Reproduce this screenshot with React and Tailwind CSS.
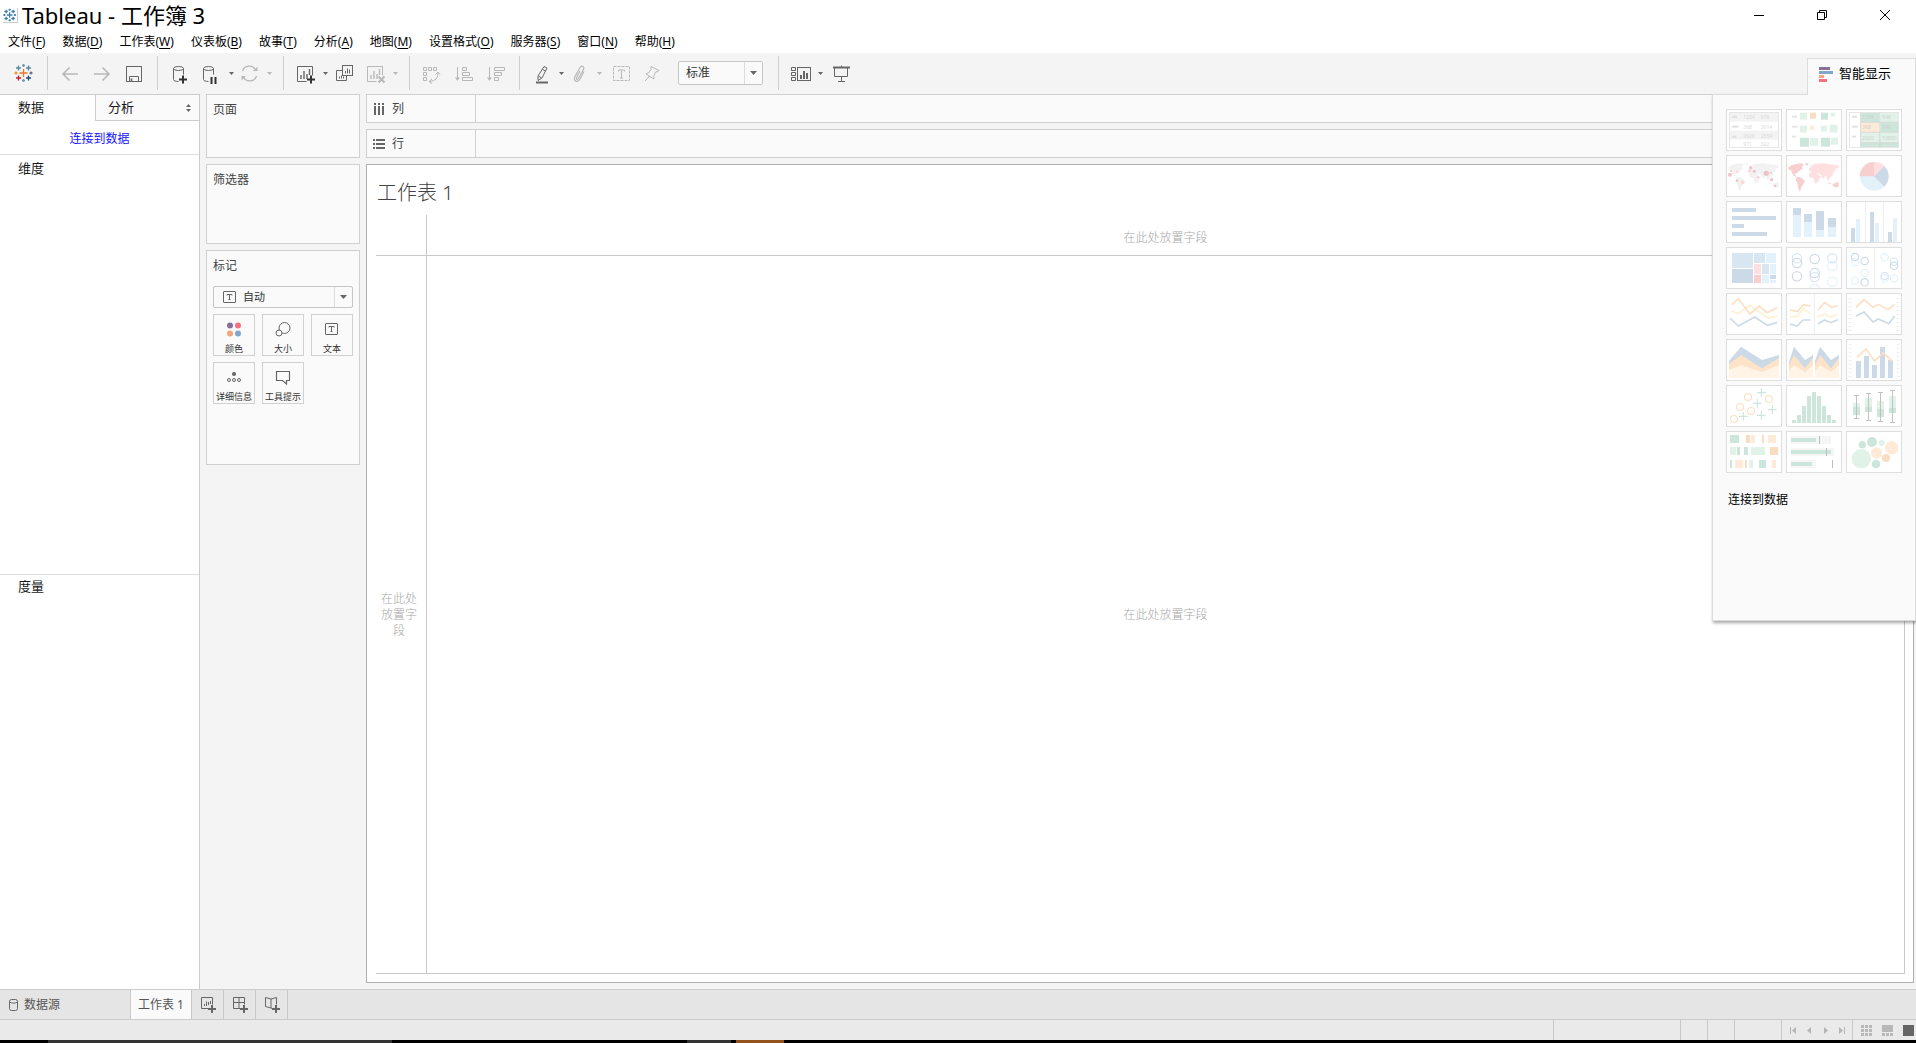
import React from 'react';

const MENUS = [
  ['文件', 'F'],
  ['数据', 'D'],
  ['工作表', 'W'],
  ['仪表板', 'B'],
  ['故事', 'T'],
  ['分析', 'A'],
  ['地图', 'M'],
  ['设置格式', 'O'],
  ['服务器', 'S'],
  ['窗口', 'N'],
  ['帮助', 'H'],
];

const LOGO_MARKS = [
  [11.5, 12, 4, '#e8762c'],
  [6.5, 7, 2.5, '#59879b'],
  [16.5, 7, 2.5, '#59879b'],
  [6.5, 17, 2.5, '#c72035'],
  [16.5, 17, 2.5, '#1f447e'],
  [11.5, 4.5, 1.5, '#7199a6'],
  [11.5, 19.5, 1.5, '#7199a6'],
  [4, 12, 1.5, '#eb912c'],
  [19, 12, 1.5, '#5b6591'],
];

const Logo = ({ mono }) => (
  <svg
    viewBox={mono ? '2 2 20 20' : '0 0 24 24'}
    className={mono ? 'size-3.5' : 'size-6'}
    fill="none"
    strokeWidth={mono ? 1.8 : 1.3}
  >
    {LOGO_MARKS.map(([x, y, r, color]) => (
      <path key={`${x}-${y}`} d={`M${x - r} ${y}h${r * 2}M${x} ${y - r}v${r * 2}`} stroke={mono || color} />
    ))}
  </svg>
);

// Botão da barra de ferramentas, ícone desenhado numa grade 24x24
const Tool = ({ label, disabled, children }) => (
  <button
    type="button"
    aria-label={label}
    disabled={disabled}
    className={`mx-1 size-6 shrink-0 ${disabled ? 'text-[#b8b8b8]' : 'text-[#666666]'}`}
  >
    <svg viewBox="0 0 24 24" className="size-6" fill="none" stroke="currentColor" strokeWidth="1">
      {children}
    </svg>
  </button>
);

const Caret = ({ label, tight, disabled }) => (
  <button
    type="button"
    aria-label={label}
    className={`-ml-1 flex h-6 w-3.5 shrink-0 items-center justify-center ${tight ? '-mr-1' : ''} ${disabled ? 'text-[#b8b8b8]' : 'text-[#666666]'}`}
  >
    <svg viewBox="0 0 5 3" className="h-[3px] w-[5px]" fill="currentColor"><path d="M0 0h5L2.5 3z" /></svg>
  </button>
);

const Separator = () => <div className="ml-[7px] mr-1.5 h-[34px] w-px shrink-0 bg-[#cfcfcf]" />;

const SheetGlyph = () => (
  <>
    <path d="M12.5 20.5H3.5V5.5h15v9" />
    <path d="M7 18v-4M10 18v-8M13 18v-5M15.5 14v-6" strokeWidth="1.4" />
  </>
);

const SelectArrow = () => (
  <span className="pointer-events-none absolute inset-y-px right-px flex w-[18px] items-center justify-center border-l border-[#dcdcdc] text-[#666666]">
    <svg viewBox="0 0 7 4" className="h-1 w-[7px]" fill="currentColor"><path d="M0 0h7L3.5 4z" /></svg>
  </span>
);

const Toolbar = () => (
  <div className="flex h-[41px] items-center bg-[#f4f4f4] pb-px pl-2">
    <button type="button" aria-label="开始页" className="mx-1 size-6 shrink-0"><Logo /></button>
    <Separator />
    <Tool label="撤消" disabled><path d="M20 13H5M11.5 6.5L5 13l6.5 6.5" strokeWidth="1.6" /></Tool>
    <Tool label="重做" disabled><path d="M4 13h15M12.5 6.5L19 13l-6.5 6.5" strokeWidth="1.6" /></Tool>
    <Tool label="保存">
      <rect x="4.5" y="5.5" width="15" height="15" />
      <path d="M7.5 20.5v-5h9v5" />
      <path d="M9.5 17.5V20" strokeWidth="1.6" />
    </Tool>
    <Separator />
    <Tool label="新建数据源">
      <ellipse cx="10.5" cy="7.5" rx="5" ry="2" />
      <path d="M5.5 7.5v11c0 1.2 2 1.9 5 2M15.5 7.5v6" />
      <path d="M11 18.5h8M15 14.5v8" stroke="#333333" strokeWidth="2" />
    </Tool>
    <Tool label="暂停自动更新">
      <ellipse cx="8.5" cy="7.5" rx="5" ry="2" />
      <path d="M3.5 7.5v11c0 1.2 2 1.9 5 2M13.5 7.5v6" />
      <path d="M11.5 16v7M15.5 16v7" stroke="#333333" strokeWidth="2" />
    </Tool>
    <Caret label="暂停选项" tight />
    <Tool label="运行更新" disabled>
      <path d="M4.5 10a7 7 0 0 1 13-1M18.5 15a7 7 0 0 1-13 1" strokeWidth="1.3" />
      <path d="M19.5 5.5V10H15zM3.5 19.5V15H8z" fill="currentColor" stroke="none" />
    </Tool>
    <Caret label="更新选项" disabled />
    <Separator />
    <Tool label="新建工作表">
      <SheetGlyph />
      <path d="M13 18.5h8M17 14.5v8" stroke="#333333" strokeWidth="2" />
    </Tool>
    <Caret label="新建选项" tight />
    <Tool label="复制工作表">
      <rect x="10.5" y="4.5" width="10" height="10" />
      <path d="M10.5 9.5h-6v10h10v-5" />
      <path d="M13.5 12.5V10M15.5 12.5v-5M17.5 12.5v-4M7.5 17.5v-2M9.5 17.5v-3M11.5 17.5v-2" />
    </Tool>
    <Tool label="清除工作表" disabled>
      <SheetGlyph />
      <path d="M14.5 15.5l6 6M20.5 15.5l-6 6" strokeWidth="2" />
    </Tool>
    <Caret label="清除选项" disabled />
    <Separator />
    <Tool label="交换行和列" disabled>
      <path d="M3.5 6.5h3v3h-3zM8.5 6.5h3v3h-3zM13.5 6.5h3v3h-3zM3.5 11.5h3v3h-3zM3.5 16.5h3v3h-3z" />
      <path d="M18 12c0 5-2.5 7.5-8 8.5M15.5 13.5L18 11l2 2.5M12 18l-3 2.5 3 2" />
    </Tool>
    <Tool label="升序排序" disabled>
      <path d="M5.5 6v12M10.5 6.5h4v3h-4zM10.5 11.5h7v3h-7zM10.5 16.5h10v3h-10z" />
      <path d="M3 16.5h5L5.5 20z" fill="currentColor" stroke="none" />
    </Tool>
    <Tool label="降序排序" disabled>
      <path d="M5.5 6v12M10.5 6.5h10v3h-10zM10.5 11.5h7v3h-7zM10.5 16.5h4v3h-4z" />
      <path d="M3 16.5h5L5.5 20z" fill="currentColor" stroke="none" />
    </Tool>
    <Separator />
    <Tool label="突出显示">
      <path d="M14 5.5l3 1.5-5 10-4 2.5V15zM8.5 15l3 2M12.5 8.5l3 1.5" />
      <path d="M6 21.5h12" strokeWidth="2" />
    </Tool>
    <Caret label="突出显示选项" tight />
    <Tool label="组成员" disabled>
      <path d="M12 10l-3.500 6.500c-.8 1.500 1 2.500 1.900 1l5-9c1.600-3-1.900-4.400-3.400-2l-5 9c-2.500 4.500 2.500 7 5 2.500l4-7.500" strokeWidth="1.2" />
    </Tool>
    <Caret label="组选项" disabled />
    <Tool label="显示标记标签" disabled>
      <rect x="3.5" y="5.5" width="16" height="14" strokeDasharray="3 1" />
      <path d="M8.5 10.5V9h6v1.5M11.5 9v8M10 17h3" />
    </Tool>
    <Tool label="固定轴" disabled>
      <path d="M9 5.5l8 4-1 1-2.500.5-1.500 3.500v3.500l-8-5 3-1.500 2-3zM7.500 15L3 20" />
    </Tool>
    <div className="relative mx-2 shrink-0">
      <select
        aria-label="适合"
        className="block h-6 w-[85px] appearance-none rounded-xs border border-[#c6c6c6] bg-[#fafafa] pl-[7px] text-xs leading-5 text-[#333333]"
      >
        <option>标准</option>
        <option>适合宽度</option>
        <option>整个视图</option>
      </select>
      <SelectArrow />
    </div>
    <Separator />
    <Tool label="显示/隐藏卡">
      <path d="M2.5 6.5h4v3h-4zM2.5 11.5h4v3h-4zM2.5 16.5h4v3h-4z" />
      <rect x="8.5" y="6.5" width="13" height="13" />
      <path d="M12 18v-4M15 18v-8M18 18v-6" strokeWidth="2" />
    </Tool>
    <Caret label="卡选项" />
    <Tool label="演示模式">
      <path d="M2 6.5h17" strokeWidth="2" />
      <path d="M3.500 7v8.500h13V7M10.5 4.5V6M10.5 15.5v5M7 20.5h7" />
    </Tool>
  </div>
);

const TitleBar = () => (
  <div className="flex h-[30px] items-center justify-between pl-[3px]">
    <div className="flex items-center gap-1">
      <span className="border-b border-r border-[#cccccc]"><Logo mono="#3f7fae" /></span>
      <h1 className="text-[22px] leading-[30px] text-black">Tableau - 工作簿 3</h1>
    </div>
    <div className="flex text-black">
      <button type="button" aria-label="最小化" className="flex h-7 w-[63px] items-center justify-center">
        <svg viewBox="0 0 10 10" className="size-2.5" stroke="currentColor"><path d="M0 5.5h10" /></svg>
      </button>
      <button type="button" aria-label="还原" className="flex h-7 w-[63px] items-center justify-center">
        <svg viewBox="0 0 10 10" className="size-2.5" fill="none" stroke="currentColor"><path d="M.5 2.5h7v7h-7zM2.5 2.5v-2h7v7h-2" /></svg>
      </button>
      <button type="button" aria-label="关闭" className="flex h-7 w-[63px] items-center justify-center">
        <svg viewBox="0 0 10 10" className="size-2.5" stroke="currentColor"><path d="M0 0l10 10M10 0L0 10" /></svg>
      </button>
    </div>
  </div>
);

const MenuBar = () => (
  <nav className="flex h-[23px] items-start gap-[17px] pl-2 text-xs leading-6 text-black">
    {MENUS.map(([name, key]) => (
      <button key={key} type="button">
        {name}(<span className="underline underline-offset-2">{key}</span>)
      </button>
    ))}
  </nav>
);

const DataPane = () => (
  <aside className="flex w-[200px] shrink-0 flex-col border-r border-t border-[#cccccc] bg-white text-[13px] text-[#1a1a1a]">
    <div className="flex h-[26px]">
      <button type="button" className="w-[95px] pl-[18px] text-left">数据</button>
      <button type="button" className="flex flex-1 items-center justify-between border-b border-l border-[#cccccc] bg-[#fafafa] pl-3 pr-2">
        分析
        <svg viewBox="0 0 5 8" className="h-2 w-[5px]" fill="#666666"><path d="M0 3h5L2.5 0zM0 5h5L2.5 8z" /></svg>
      </button>
    </div>
    <div className="h-[34px] border-b border-[#dedede] pt-2 text-center text-xs leading-5">
      <a href="#connect" className="text-[#1414ff]">连接到数据</a>
    </div>
    <section className="h-[420px] border-b border-[#dedede] pl-[18px] pt-1 leading-5">
      <h2 className="-mt-px">维度</h2>
    </section>
    <section className="flex-1 pl-[18px] pt-px leading-5">
      <h2>度量</h2>
    </section>
  </aside>
);

const Card = ({ title, className, children }) => (
  <section className={`border border-[#d0d0d0] bg-[#fafafa] px-1.5 pt-[7px] text-xs text-[#444444] ${className}`}>
    <h2 className="leading-4">{title}</h2>
    {children}
  </section>
);

const MarkButton = ({ label, children }) => (
  <button type="button" className="flex h-[42px] flex-col items-center justify-between overflow-hidden border border-[#d0d0d0] bg-[#fafafa] pt-1 text-[9px] leading-[13px] text-[#333333]">
    <svg viewBox="0 0 22 22" className="size-[22px] shrink-0" fill="none" stroke="#666666">{children}</svg>
    <span className="whitespace-nowrap">{label}</span>
  </button>
);

const TextBoxGlyph = () => (
  <>
    <rect x="4.5" y="4.5" width="12" height="11" rx=".5" />
    <path d="M8 8.5v-1h5v1M10.5 7.5v5M9.5 12.5h2" />
  </>
);

const CardsColumn = () => (
  <div className="flex w-[154px] shrink-0 flex-col gap-1.5">
    <Card title="页面" className="h-16" />
    <Card title="筛选器" className="h-20" />
    <Card title="标记" className="h-[215px]">
      <div className="relative mb-1.5 mt-3">
        <select
          aria-label="标记类型"
          className="block h-[22px] w-full appearance-none rounded-xs border border-[#c6c6c6] bg-[#fafafa] pl-[29px] text-[11px] leading-5 text-[#333333]"
        >
          <option>自动</option>
          <option>条形图</option>
          <option>线</option>
        </select>
        <svg viewBox="0 0 22 22" className="pointer-events-none absolute left-1.5 top-px size-[22px]" fill="none" stroke="#666666">
          <TextBoxGlyph />
        </svg>
        <SelectArrow />
      </div>
      <div className="grid grid-cols-3 gap-x-[7px] gap-y-1.5">
        <MarkButton label="颜色">
          <g stroke="none">
            <circle cx="7" cy="6.5" r="3" fill="#86719a" />
            <circle cx="15" cy="6.5" r="3" fill="#fb6d81" />
            <circle cx="7" cy="14.5" r="3" fill="#f4a57b" />
            <circle cx="15" cy="14.5" r="3" fill="#82a5cc" />
          </g>
        </MarkButton>
        <MarkButton label="大小">
          <circle cx="12.5" cy="9" r="5.5" />
          <circle cx="7" cy="14" r="3" fill="#fafafa" />
        </MarkButton>
        <MarkButton label="文本"><TextBoxGlyph /></MarkButton>
        <MarkButton label="详细信息">
          <circle cx="11" cy="7" r="2" fill="#666666" stroke="none" />
          <circle cx="6" cy="13" r="1.5" />
          <circle cx="11" cy="13" r="1.5" />
          <circle cx="16" cy="13" r="1.5" />
        </MarkButton>
        <MarkButton label="工具提示">
          <path d="M4.5 4.5h13v9h-3V17l-4-3.5h-6z" strokeWidth="1.2" />
        </MarkButton>
      </div>
    </Card>
  </div>
);

const Shelf = ({ title, children }) => (
  <div className="flex h-[29px] border border-r-0 border-[#d0d0d0] bg-[#fafafa] text-xs text-[#444444]">
    <div className="flex w-[109px] items-center gap-[7px] border-r border-[#d0d0d0] pl-1.5">
      <svg viewBox="0 0 12 12" className="size-3" fill="none" stroke="#666666" strokeWidth="2">{children}</svg>
      {title}
    </div>
  </div>
);

const DROP_HINT = '在此处放置字段';

const Worksheet = () => (
  <main className="flex min-w-0 flex-1 flex-col gap-1.5">
    <Shelf title="列">
      <path d="M2 0v2M2 3v9M6 0v2M6 3v9M10 0v2M10 3v9" />
    </Shelf>
    <Shelf title="行">
      <path d="M0 2h2M3 2h9M0 6h2M3 6h9M0 10h2M3 10h9" />
    </Shelf>
    <div className="mb-1.5 mr-0.5 flex flex-1 flex-col border border-[#b0b0b0] bg-white pb-2 pl-[9px] pr-2 font-light">
      <h2 className="h-[50px] pl-px pt-3 text-xl leading-8 text-[#444444]">工作表 1</h2>
      <div className="grid flex-1 grid-cols-[51px_1fr] grid-rows-[41px_1fr] border-b border-r border-[#c8c8c8] text-xs leading-4 text-[#a8a8a8]">
        <div className="border-b border-r border-[#c8c8c8]" />
        <div className="flex items-center justify-center border-b border-[#c8c8c8] pt-1.5">{DROP_HINT}</div>
        <div className="flex items-center justify-center border-r border-[#c8c8c8] pr-1 text-center">
          <p className="w-9">{DROP_HINT}</p>
        </div>
        <div className="flex items-center justify-center">{DROP_HINT}</div>
      </div>
    </div>
  </main>
);

// Formas simplificadas dos continentes para as miniaturas de mapa
const WORLD = [
  'M3 35l11-8 25-5 12 1-7 9 4 5-11 8-8 7-7 2 8 9-11-4-8-18-5 2z',
  'M29 63l8 0 8 3 9 10-6 10-5 8-4 13-5-9-3-17-5-9z',
  'M54 22h12l-7 9z',
  'M66 52l8-3h16l4 9 8 3-8 15-5 6h-6l-3-15-12-3z',
  'M66 44l-1-6 11-10 6-5 28-1 18 3 26 3 2 7-11 3-2 9-5 2-1 11-7 3-5 10-4-1-5-14-6 10-4-2-4-9-8-5-8 2-10-4z',
  'M118 76l7 4 10 2-9 2z',
  'M136 85l8-4 10-3 2 12-7 5-11-4z',
];

const Circles = ({ items, r, color }) => (
  <g fill="none" stroke={color} strokeWidth="3.5">
    {items.map(([x, y]) => <circle key={`${x}-${y}`} cx={x} cy={y} r={r} />)}
  </g>
);

const Rects = ({ items, color }) => (
  <g fill={color}>
    {items.map(([x, y, w, h]) => <rect key={`${x}-${y}`} x={x} y={y} width={w} height={h} />)}
  </g>
);

const BLUE = '#ccdae8';
const SKY = '#e3f1fb';
const GREEN = '#cde6db';
const MINT = '#e1f3e8';
const ORANGE = '#fadcc0';
const PEACH = '#feead6';

const THUMBS = [
  ['文本表', (
    <>
      <rect x="7.5" y="7.5" width="147" height="105" fill="#fff" stroke="#e6e6e6" strokeWidth="3" />
      <Rects color="#f3f3f3" items={[[9, 9, 144, 26], [9, 62, 144, 27]]} />
      <Rects color="#e2e2e2" items={[[15, 17, 15, 7], [15, 47, 19, 6], [15, 77, 13, 7]]} />
      <g fill="#d8d8d8" fontSize="15">
        <text x="49" y="28">1234</text><text x="101" y="28">678</text>
        <text x="49" y="56">368</text><text x="101" y="56">3014</text>
        <text x="49" y="83">2620</text><text x="101" y="83">2559</text>
        <text x="49" y="107">971</text><text x="101" y="107">322</text>
      </g>
    </>
  )],
  ['热图', (
    <>
      <Rects color="#e6e6e6" items={[[15, 17, 15, 6], [15, 47, 18, 6], [15, 77, 12, 6]]} />
      <Rects color={MINT} items={[[39, 8, 21, 21], [132, 8, 12, 12], [39, 47, 21, 21], [102, 47, 18, 18], [128, 44, 24, 24], [69, 84, 24, 24], [132, 83, 21, 21]]} />
      <Rects color={GREEN} items={[[102, 8, 21, 21], [39, 83, 27, 27], [102, 83, 27, 27]]} />
      <Rects color={ORANGE} items={[[69, 8, 18, 18]]} />
      <Rects color={PEACH} items={[[69, 47, 12, 12]]} />
    </>
  )],
  ['突出显示表', (
    <>
      <rect x="7.5" y="7.5" width="147" height="105" fill="#fff" stroke="#e6e6e6" strokeWidth="3" />
      <Rects color="#e2e2e2" items={[[15, 17, 15, 6], [15, 47, 18, 6], [15, 77, 12, 6]]} />
      <Rects color={GREEN} items={[[42, 9, 55, 27], [100, 38, 54, 28], [42, 99, 112, 12]]} />
      <Rects color={MINT} items={[[100, 9, 54, 27], [42, 69, 112, 28]]} />
      <Rects color={PEACH} items={[[42, 39, 55, 27]]} />
      <path d="M42 37h112M42 67h112M42 98h112M98.5 8v104M41 8v104" stroke="#d0d0d0" strokeWidth="2.5" />
      <g fill="#cfcfcf" fontSize="15">
        <text x="46" y="28">1234</text><text x="106" y="28">546</text>
        <text x="46" y="58">368</text><text x="106" y="58">340</text>
        <text x="46" y="89">2620</text><text x="106" y="89">53890</text>
      </g>
    </>
  )],
  ['符号地图', (
    <>
      <g fill="#f2f2f2">{WORLD.map((d) => <path key={d} d={d} />)}</g>
      <g fill="#efc3cb">
        <circle cx="9" cy="56" r="6" /><circle cx="118" cy="52" r="8" /><circle cx="82" cy="46" r="5" />
        <circle cx="71" cy="35" r="5" /><circle cx="30" cy="74" r="4" /><circle cx="134" cy="71" r="5" />
        <circle cx="144" cy="90" r="4" /><circle cx="12" cy="45" r="3" /><circle cx="132" cy="50" r="3" /><circle cx="93" cy="64" r="3" />
      </g>
      <g fill="#fcd9d9"><circle cx="47" cy="79" r="6" /><circle cx="31" cy="47" r="4" /><circle cx="67" cy="45" r="5" /></g>
    </>
  )],
  ['地图', (
    <g>{WORLD.map((d, i) => <path key={d} d={d} fill={i === 3 || i === 4 ? '#ffdfdf' : '#f7cfcf'} />)}</g>
  )],
  ['饼图', (
    <>
      <circle cx="82" cy="61" r="43" fill={SKY} />
      <path d="M81 61V18a43 43 0 0 0-43 43z" fill="#f7cfcf" />
      <path d="M81 61V18a43 43 0 0 1 31 13z" fill="#ffdfdf" />
      <path d="M81 61l31-30a43 43 0 0 1 0 61z" fill={BLUE} />
    </>
  )],
  ['水平条', <Rects color={BLUE} items={[[15, 18, 72, 12], [15, 42, 132, 12], [15, 66, 36, 12], [15, 90, 105, 12]]} />],
  ['堆叠条', (
    <>
      <Rects color={BLUE} items={[[18, 18, 24, 21], [51, 36, 24, 24], [87, 27, 24, 57], [123, 48, 24, 27]]} />
      <Rects color={SKY} items={[[18, 39, 24, 66], [51, 60, 24, 45], [87, 84, 24, 21], [123, 75, 24, 30]]} />
    </>
  )],
  ['并排条', (
    <>
      <Rects color="#ededed" items={[[54, 0, 3, 120], [108, 0, 3, 120]]} />
      <Rects color={BLUE} items={[[12, 78, 12, 42], [69, 30, 12, 90], [123, 90, 12, 30]]} />
      <Rects color={SKY} items={[[27, 51, 12, 69], [84, 63, 12, 57], [138, 48, 12, 72]]} />
    </>
  )],
  ['树状图', (
    <>
      <Rects color="#d8e6f2" items={[[15, 15, 63, 45], [81, 15, 33, 30], [105, 48, 21, 30]]} />
      <Rects color={BLUE} items={[[15, 63, 63, 42], [129, 81, 18, 12]]} />
      <Rects color={SKY} items={[[117, 15, 30, 30], [129, 48, 18, 30], [105, 81, 21, 24], [129, 96, 18, 9]]} />
      <Rects color="#ffdfdf" items={[[81, 48, 21, 30]]} />
      <Rects color="#f7cfcf" items={[[81, 81, 21, 24]]} />
    </>
  )],
  ['圆视图', (
    <>
      <Circles r={14} color={SKY} items={[[136, 54], [136, 101], [84, 123]]} />
      <Circles r={14} color="#d8e6f2" items={[[30, 31], [136, 31], [83, 87]]} />
      <Circles r={14} color={BLUE} items={[[30, 45], [83, 33], [30, 85], [83, 75]]} />
    </>
  )],
  ['并排圆', (
    <>
      <Rects color="#ededed" items={[[81, 0, 3, 120]]} />
      <Circles r={11} color={SKY} items={[[24, 42], [24, 98], [53, 75], [113, 28], [113, 91], [141, 91]]} />
      <Circles r={11} color="#d8e6f2" items={[[141, 41], [113, 84]]} />
      <Circles r={11} color={BLUE} items={[[24, 27], [53, 39], [53, 103], [141, 53]]} />
    </>
  )],
  ['连续线', (
    <g fill="none" strokeWidth="5">
      <path d="M12 50l22 9 34-25 55 38 28-6" stroke="#fef0d2" />
      <path d="M15 32l19-18 35 46 28-24 23 20 31-15" stroke="#fde0c4" />
      <path d="M9 72l25 24 49-27 38 25 30-9" stroke={BLUE} />
    </g>
  )],
  ['离散线', (
    <g fill="none" strokeWidth="5">
      <path d="M82 0v120" stroke="#ededed" strokeWidth="3" />
      <path d="M9 69l21-2 19-23 20 14M90 69l23-8 18 8 21-9" stroke="#fef0d2" />
      <path d="M9 48l22 5 18-20 22 3M93 48l20-23 20 15 19-5" stroke="#fde0c4" />
      <path d="M9 90l21 6 18-18h22M93 90l19-12 19 8 21-9" stroke={BLUE} />
    </g>
  )],
  ['双线', (
    <g fill="none" strokeWidth="5">
      <path d="M9 12v100M153 12v100" stroke="#ededed" strokeWidth="9" strokeDasharray="3 9" />
      <path d="M27 40l24-23 27 23 16-9 29 16 20-16" stroke="#fde0c4" />
      <path d="M27 66l24-12 27 30 16-9 31 14 18-23" stroke={BLUE} />
    </g>
  )],
  ['连续区域图', (
    <>
      <path d="M6 63l36-43 63 40 51-15v69H6z" fill={BLUE} />
      <path d="M6 72l36-27 63 40 51-31v60H6z" fill="#fde3c8" />
      <path d="M6 90l36-14 63 20 51-21v39H6z" fill="#fff4e6" />
    </>
  )],
  ['离散区域图', (
    <>
      <path d="M6 66l15-46 33 40 24-15v69H6zM84 63l15-43 33 40 24-15v69H84z" fill={BLUE} />
      <path d="M6 75l15-30 33 40 24-31v60H6zM84 75l15-30 33 40 24-31v60H84z" fill="#fde3c8" />
      <path d="M6 92l15-16 33 20 24-21v39H6zM84 92l15-16 33 20 24-21v39H84z" fill="#fff4e6" />
    </>
  )],
  ['双组合', (
    <>
      <path d="M9 12v100M153 12v100" stroke="#ededed" strokeWidth="9" strokeDasharray="3 9" />
      <Rects color={BLUE} items={[[27, 63, 15, 51], [51, 48, 15, 66], [75, 75, 15, 39], [99, 21, 15, 93], [123, 60, 15, 54]]} />
      <path d="M30 52l27-25 26 36 26-24 27 25" fill="none" stroke="#fde0c4" strokeWidth="5" />
    </>
  )],
  ['散点图', (
    <>
      <Circles r={10.5} color="#fde0c4" items={[[63, 33], [126, 39], [39, 63], [72, 75], [21, 99]]} />
      <path d="M90 20h26M103 7v26M78 52h26M91 39v26M123 71h26M136 58v26M90 88h26M103 75v26M36 91h26M49 78v26" stroke={GREEN} strokeWidth="3.5" />
    </>
  )],
  ['直方图', (
    <Rects color={GREEN} items={[[15, 102, 12, 9], [30, 87, 12, 24], [45, 60, 12, 51], [60, 30, 12, 81], [75, 18, 12, 93], [90, 30, 12, 81], [105, 60, 12, 51], [120, 87, 12, 24], [135, 102, 12, 9]]} />
  )],
  ['盒须图', (
    <>
      <Rects color={MINT} items={[[18, 51, 21, 12], [54, 36, 21, 27], [90, 45, 21, 24], [126, 30, 21, 36]]} />
      <Rects color={GREEN} items={[[18, 63, 21, 24], [54, 63, 21, 15], [90, 69, 21, 24], [126, 66, 21, 15]]} />
      <path d="M21 28.5h15M28.5 28v69M21 97.5h15M57 22.5h15M64.5 22v81M57 103.5h15M93 19.5h15M100.5 19v87M93 106.5h15M129 13.5h15M136.5 13v96M129 109.5h15" stroke="#c2c2c2" strokeWidth="3" />
    </>
  )],
  ['甘特图', (
    <>
      <Rects color={GREEN} items={[[9, 9, 27, 24], [30, 45, 9, 24], [51, 45, 12, 24], [9, 84, 6, 24], [96, 84, 21, 24]]} />
      <Rects color={MINT} items={[[9, 45, 18, 24], [72, 45, 42, 24], [66, 84, 12, 24]]} />
      <Rects color={ORANGE} items={[[57, 9, 12, 24], [105, 9, 6, 24], [129, 45, 24, 24], [54, 84, 6, 24]]} />
      <Rects color={PEACH} items={[[72, 9, 12, 24], [123, 9, 24, 24], [24, 84, 24, 24], [135, 84, 12, 24]]} />
    </>
  )],
  ['靶心图', (
    <>
      <Rects color="#f6f6f6" items={[[12, 12, 120, 24], [12, 48, 130, 24], [12, 84, 75, 24]]} />
      <Rects color={GREEN} items={[[12, 18, 75, 12], [12, 54, 120, 12], [12, 90, 63, 12]]} />
      <Rects color="#bdbdbd" items={[[96, 12, 3, 24], [117, 48, 3, 24], [135, 84, 3, 24]]} />
    </>
  )],
  ['填充气泡图', (
    <>
      <g fill={MINT}><circle cx="43" cy="80" r="29" /><circle cx="104" cy="33" r="9" /></g>
      <g fill={GREEN}><circle cx="46" cy="38" r="11" /><circle cx="75" cy="30" r="15" /><circle cx="87" cy="96" r="13" /></g>
      <g fill={PEACH}><circle cx="89" cy="63" r="17" /><circle cx="134" cy="47" r="20" /></g>
      <circle cx="117" cy="78" r="12" fill={ORANGE} />
    </>
  )],
];

// Painel flutuante sobre as prateleiras
const ShowMe = () => (
  <div className="absolute right-0 top-[5px] z-10 flex flex-col items-end">
    <button type="button" className="relative z-10 -mb-px flex h-[37px] w-[109px] items-center gap-1.5 border border-b-0 border-[#dcdcdc] bg-[#fafafa] pb-1.5 pl-[11px] text-[13px] text-black">
      <svg viewBox="0 0 14 15" className="h-[15px] w-3.5">
        <path d="M0 0h11v3H0z" fill="#86719a" />
        <path d="M0 4h14v3H0z" fill="#82a5cc" />
        <path d="M0 8h5v3H0z" fill="#f4a57b" />
        <path d="M0 12h8v3H0z" fill="#fb6d81" />
      </svg>
      智能显示
    </button>
    <div className="h-[527px] w-[204px] border border-[#dcdcdc] bg-[#fafafa] pl-[13px] pt-3.5 shadow-[1px_2px_3px_rgba(0,0,0,0.35)]">
      <div className="grid w-44 grid-cols-3 gap-1">
        {THUMBS.map(([name, drawing]) => (
          <button key={name} type="button" aria-label={name} disabled className="h-[42px] border border-[#dedede] bg-white">
            <svg viewBox="0 0 162 120" className="h-10 w-full">{drawing}</svg>
          </button>
        ))}
      </div>
      <p className="mt-[17px] pl-0.5 text-xs leading-5 text-black">连接到数据</p>
    </div>
  </div>
);

const NewTab = ({ label, children }) => (
  <button type="button" aria-label={label} className="flex w-8 items-center justify-center border-r border-[#c8c8c8] pl-0.5">
    <svg viewBox="0 0 16 16" className="size-4" fill="none" stroke="#666666">
      {children}
      <path d="M7 12h8M11 8v8" strokeWidth="2" />
    </svg>
  </button>
);

const SheetTabs = () => (
  <div className="flex h-[31px] shrink-0 border-y border-[#cccccc] bg-[#e5e5e5] text-xs text-[#555555]">
    <button type="button" className="flex w-[131px] items-center gap-1.5 border-r border-[#c8c8c8] pl-[9px]">
      <svg viewBox="0 0 9 12" className="h-3 w-[9px]" fill="none" stroke="#666666">
        <rect x=".5" y=".5" width="8" height="11" rx="2" />
        <path d="M.5 3c2 1.5 6 1.5 8 0" />
      </svg>
      数据源
    </button>
    <button type="button" className="w-[61px] border-r border-[#c8c8c8] bg-[#fafafa]">工作表 1</button>
    <NewTab label="新建工作表">
      <path d="M7 11.5H.5V.5h11v7M3.5 9V7M5.5 9V4.5M7.5 8V5M9.5 7V4" />
    </NewTab>
    <NewTab label="新建仪表板">
      <path d="M7 11.5H.5V.5h11v7M.5 5.5h11M6 .5v11" />
    </NewTab>
    <NewTab label="新建故事">
      <path d="M7 11.5L6 11 .5 9.5v-9L6 2 11.5.5v7M6 2v9" />
    </NewTab>
  </div>
);

const NavArrow = ({ label, d }) => (
  <button type="button" aria-label={label} className="flex w-4 items-center justify-center">
    <svg viewBox="0 0 7 7" className="size-[7px]" fill="#b5b5b5"><path d={d} /></svg>
  </button>
);

const StatusBar = () => (
  <footer className="flex h-5 shrink-0 justify-end bg-[#eaeaea]">
    <div className="w-[127px] border-l border-[#c8c8c8]" />
    <div className="w-[27px] border-l border-[#c8c8c8]" />
    <div className="w-[27px] border-l border-[#c8c8c8]" />
    <div className="w-[47px] border-l border-[#c8c8c8]" />
    <div className="flex w-[71px] justify-center border-l border-[#c8c8c8]">
      <NavArrow label="第一个" d="M0 0h1v7H0zM6 0v7L2 3.5z" />
      <NavArrow label="上一个" d="M5 0v7L1 3.5z" />
      <NavArrow label="下一个" d="M2 0v7l4-3.5z" />
      <NavArrow label="最后一个" d="M6 0h1v7H6zM1 0v7l4-3.5z" />
    </div>
    <div className="flex w-16 items-center justify-between border-l border-[#c8c8c8] pl-2 pr-0.5">
      <button type="button" aria-label="工作表排序程序">
        <svg viewBox="0 0 11 11" className="size-[11px]" fill="#b8b8b8"><path d="M0 0h3v3H0zM4 0h3v3H4zM8 0h3v3H8zM0 4h3v3H0zM4 4h3v3H4zM8 4h3v3H8zM0 8h3v3H0zM4 8h3v3H4zM8 8h3v3H8z" /></svg>
      </button>
      <button type="button" aria-label="胶片">
        <svg viewBox="0 0 11 11" className="size-[11px]" fill="#b8b8b8"><path d="M0 0h11v7H0zM0 8h3v3H0zM4 8h3v3H4zM8 8h3v3H8z" /></svg>
      </button>
      <button type="button" aria-label="标签">
        <svg viewBox="0 0 11 11" className="size-[11px]" fill="#666666"><path d="M0 0h11v11H0z" /></svg>
      </button>
    </div>
  </footer>
);

const App = () => (
  <div className="flex h-screen flex-col overflow-hidden bg-white font-['Noto_Sans','Noto_Sans_CJK_SC',sans-serif]">
    <TitleBar />
    <MenuBar />
    <div className="relative flex min-h-0 flex-1 flex-col">
      <Toolbar />
      <div className="flex min-h-0 flex-1 gap-1.5 bg-[#f4f4f4]">
        <DataPane />
        <CardsColumn />
        <Worksheet />
      </div>
      <ShowMe />
    </div>
    <SheetTabs />
    <StatusBar />
    <div className="flex h-[3px] shrink-0 bg-black">
      <div className="ml-12 w-[344px] bg-[#333333]" />
      <div className="ml-[295px] w-11 bg-[#333333]" />
      <div className="ml-[5px] w-12 bg-[#94531c]" />
    </div>
  </div>
);

export default App;
